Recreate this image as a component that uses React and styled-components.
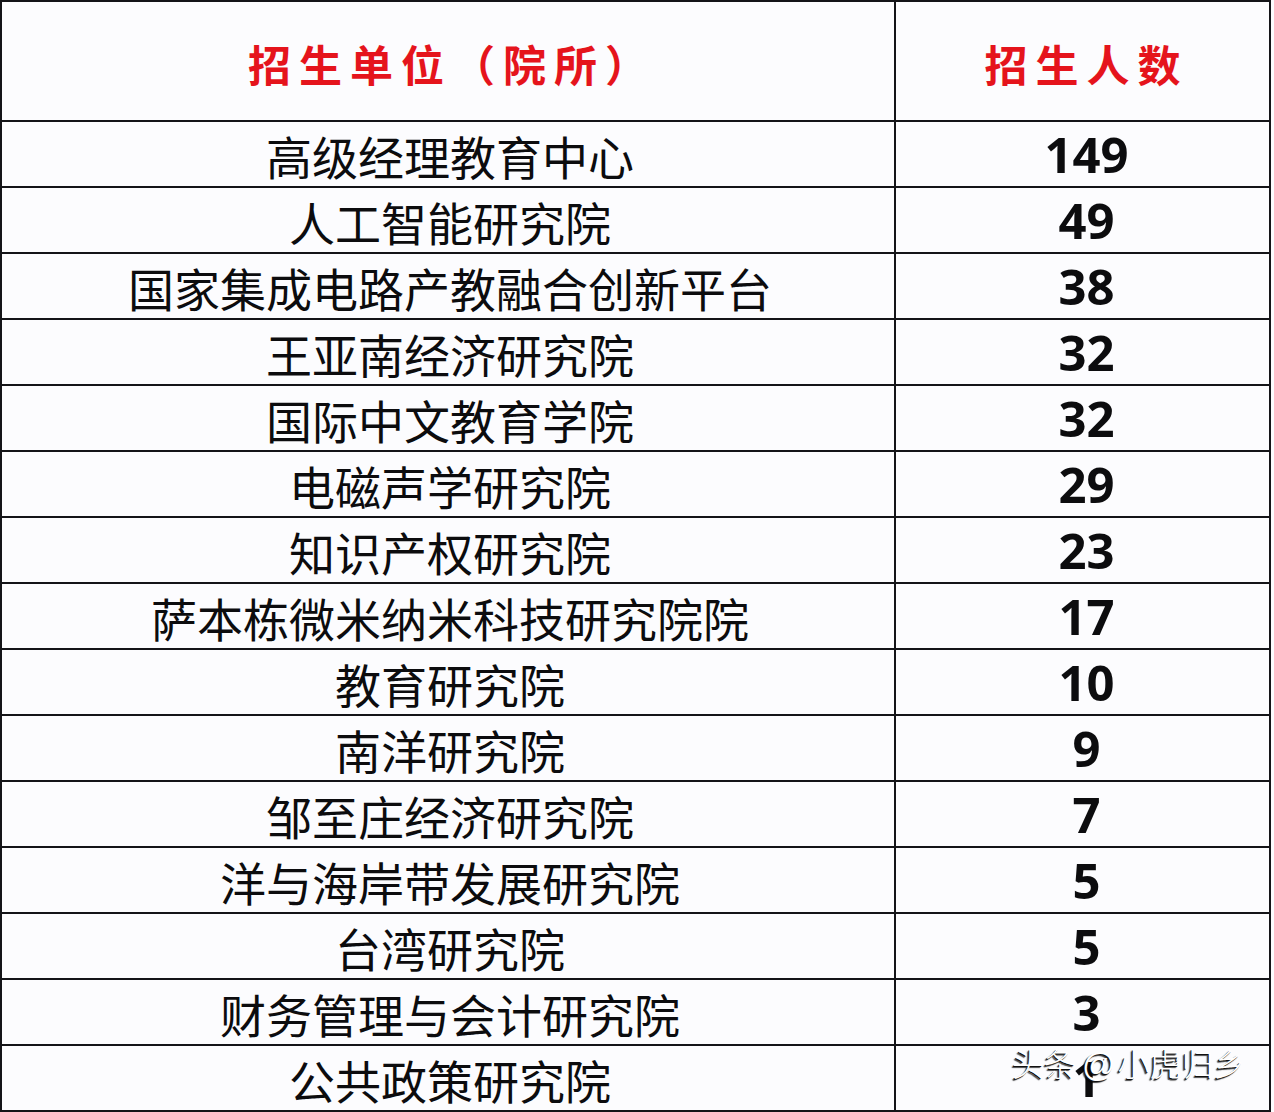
import React from "react";
import styled, { createGlobalStyle } from "styled-components";

const GlobalStyle = createGlobalStyle`
  html, body {
    margin: 0;
    padding: 0;
    background: #fcfcfe;
  }
`;

const rows = [
  { name: "高级经理教育中心", count: 149 },
  { name: "人工智能研究院", count: 49 },
  { name: "国家集成电路产教融合创新平台", count: 38 },
  { name: "王亚南经济研究院", count: 32 },
  { name: "国际中文教育学院", count: 32 },
  { name: "电磁声学研究院", count: 29 },
  { name: "知识产权研究院", count: 23 },
  { name: "萨本栋微米纳米科技研究院院", count: 17 },
  { name: "教育研究院", count: 10 },
  { name: "南洋研究院", count: 9 },
  { name: "邹至庄经济研究院", count: 7 },
  { name: "洋与海岸带发展研究院", count: 5 },
  { name: "台湾研究院", count: 5 },
  { name: "财务管理与会计研究院", count: 3 },
  { name: "公共政策研究院", count: 1 },
];

const App = () => {
  return (
    <>
      <GlobalStyle />
      <Table>
        <Row $head>
          <HeadCell $left>招生单位（院所）</HeadCell>
          <HeadCell>招生人数</HeadCell>
        </Row>
        {rows.map((row, i) => (
          <Row key={i}>
            <NameCell>{row.name}</NameCell>
            <CountCell>{row.count}</CountCell>
          </Row>
        ))}
        <Watermark>
          头条<At>@</At>小虎归乡
        </Watermark>
      </Table>
    </>
  );
};

const Table = styled.div`
  position: relative;
  width: 1271px;
  box-sizing: border-box;
  border: 2px solid #141418;
  background: #fcfcfe;
`;

const Row = styled.div`
  display: grid;
  grid-template-columns: 894px 1fr;
  height: ${(p) => (p.$head ? "118px" : "64px")};
  border-top: ${(p) => (p.$head ? "none" : "2px solid #141418")};
`;

const Cell = styled.div`
  display: flex;
  align-items: center;
  justify-content: center;
  line-height: 1;
  border-right: 2px solid #141418;
  &:last-child {
    border-right: none;
  }
`;

const HeadCell = styled(Cell)`
  font-family: "Noto Sans CJK SC", "Noto Sans", sans-serif;
  font-weight: 700;
  font-size: 43px;
  letter-spacing: 8px;
  color: #e5141c;
  padding-top: 4px;
  padding-left: ${(p) => (p.$left ? "8px" : "8px")};
`;

const NameCell = styled(Cell)`
  font-family: "Noto Sans CJK SC", "Noto Sans", sans-serif;
  font-weight: 400;
  font-size: 46px;
  color: #0c0c0e;
  padding-top: 2px;
  padding-left: 4px;
`;

const CountCell = styled(Cell)`
  font-family: "Open Sans", "Liberation Sans", sans-serif;
  font-weight: 700;
  font-size: 49px;
  color: #0c0c0e;
  padding-top: 0;
  padding-left: 8px;
`;

const Watermark = styled.div`
  position: absolute;
  left: 1010px;
  top: 1044px;
  line-height: 1;
  font-family: "Noto Sans CJK SC", "Noto Sans", sans-serif;
  font-weight: 300;
  font-size: 32px;
  color: #ffffff;
  white-space: nowrap;
  text-shadow: -1px 1px 0 #111, -2px 2px 1px rgba(0, 0, 0, 0.75);
`;

const At = styled.span`
  font-family: "Liberation Sans", "Noto Sans", sans-serif;
  font-size: 33px;
  margin: 0 2px 0 6px;
`;

export default App;
